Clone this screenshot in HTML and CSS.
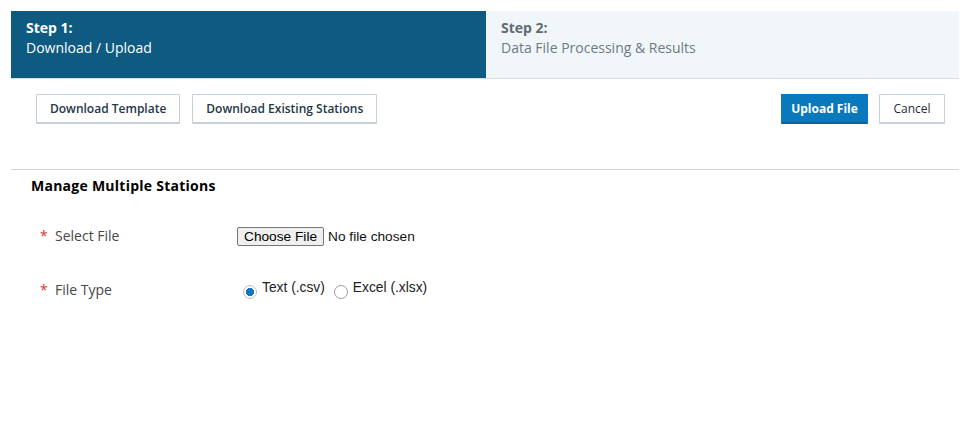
FILE: index.html
```html
<!DOCTYPE html>
<html lang="en">
<head>
<meta charset="utf-8">
<title>Manage Multiple Stations</title>
<link rel="stylesheet" href="styles.css">
</head>
<body>
<div class="page">
  <div class="steps">
    <div class="step step-active">
      <div class="step-num">Step 1:</div>
      <div class="step-name">Download / Upload</div>
    </div>
    <div class="step step-next">
      <div class="step-num">Step 2:</div>
      <div class="step-name">Data File Processing &amp; Results</div>
    </div>
  </div>

  <div class="toolbar">
    <div class="toolbar-left">
      <button class="btn btn-default">Download Template</button>
      <button class="btn btn-default">Download Existing Stations</button>
    </div>
    <div class="toolbar-right">
      <button class="btn btn-primary">Upload File</button>
      <button class="btn btn-default btn-cancel">Cancel</button>
    </div>
  </div>

  <div class="section">
    <h2 class="section-title">Manage Multiple Stations</h2>
    <div class="form-row row-file">
      <div class="label"><span class="req">*</span>Select File</div>
      <div class="field"><input type="file" class="file-input"></div>
    </div>
    <div class="form-row row-type">
      <div class="label"><span class="req">*</span>File Type</div>
      <div class="field radios">
        <label class="radio"><input type="radio" name="ft" checked><span>Text (.csv)</span></label>
        <label class="radio"><input type="radio" name="ft"><span>Excel (.xlsx)</span></label>
      </div>
    </div>
  </div>
</div>
</body>
</html>
```

FILE: styles.css
```css
html, body {
  margin: 0;
  padding: 0;
  background: #ffffff;
}
body {
  font-family: "Open Sans", "Noto Sans", sans-serif;
  font-size: 14px;
  color: #333;
}
.page {
  margin: 11px 12px 0 11px;
}
.steps {
  display: flex;
  height: 67px;
  border-bottom: 1px solid #d6dce1;
}
.step {
  flex: 0 0 auto;
  box-sizing: border-box;
  padding: 7px 15px 0 15px;
  line-height: 20px;
}
.step-active {
  width: 475px;
  background: #0f5a80;
  color: #ffffff;
}
.step-next {
  flex: 1 1 auto;
  background: #f1f6f9;
  color: #6e7a84;
}
.step-num {
  font-weight: 700;
}
.step-next .step-num {
  color: #5f6b75;
}
.toolbar {
  display: flex;
  justify-content: space-between;
  align-items: flex-start;
  padding: 15px 14px 0 25px;
  height: 75px;
  border-bottom: 1px solid #cfd4d8;
}
.toolbar-left, .toolbar-right {
  display: flex;
}
.toolbar-left { gap: 12px; }
.toolbar-right { gap: 11px; }
.btn {
  font-family: "Open Sans", "Noto Sans", sans-serif;
  font-size: 12px;
  font-weight: 600;
  height: 30px;
  box-sizing: border-box;
  padding: 0 13px;
  border-radius: 1px;
  cursor: pointer;
  line-height: 25px;
}
.btn-default {
  background: #ffffff;
  color: #243746;
  border: 1px solid #c7d0d8;
  border-bottom: 2px solid #c7d0d8;
}
.btn-primary {
  background: #0a78bd;
  color: #ffffff;
  font-weight: 700;
  border: 1px solid #0a78bd;
  border-bottom: 2px solid #08649f;
  padding: 0 9px;
  width: 87px;
}
.btn-cancel {
  font-weight: 400;
  color: #1f2d38;
  padding: 0 11px;
  width: 66px;
}
.section {
  padding: 7px 20px 0 20px;
}
.section-title {
  margin: 0;
  font-family: "Open Sans", "Noto Sans", sans-serif;
  font-size: 14px;
  font-weight: 700;
  letter-spacing: 0.25px;
  color: #000;
  line-height: 18px;
}
.form-row {
  display: flex;
  align-items: center;
  padding-left: 9px;
}
.row-file {
  margin-top: 30px;
  height: 22px;
}
.row-type {
  margin-top: 32px;
  height: 22px;
}
.label {
  width: 197px;
  color: #474747;
  font-size: 14px;
  line-height: 20px;
}
.req {
  color: #e0312b;
  display: inline-block;
  width: 15px;
  font-size: 14px;
}
.file-input {
  font-family: "Liberation Sans", Arial, sans-serif;
  font-size: 13.7px;
  color: #111;
  margin: 0;
}
.file-input::file-selector-button {
  font-family: "Liberation Sans", Arial, sans-serif;
  font-size: 13.7px;
  background: #efefef;
  border: 1px solid #767676;
  border-radius: 2px;
  padding: 1px 6px;
  margin-right: 4px;
  color: #000;
}
.radios {
  display: flex;
  gap: 9px;
  margin-left: 6px;
}
.radio {
  display: flex;
  align-items: center;
  font-family: "Liberation Sans", Arial, sans-serif;
  font-size: 13.8px;
  color: #222;
}
.radio span {
  position: relative;
  top: -3px;
}
.radio input {
  appearance: none;
  -webkit-appearance: none;
  width: 14px;
  height: 14px;
  margin: 0 5px 0 0;
  border: 1px solid #9aa0a6;
  border-radius: 50%;
  box-sizing: border-box;
  background: #fff;
  position: relative;
  top: 2px;
}
.radio input:checked {
  border-color: #b6c2cc;
  background: radial-gradient(circle, #1275bf 0 3.8px, #fff 4.4px);
}
```
